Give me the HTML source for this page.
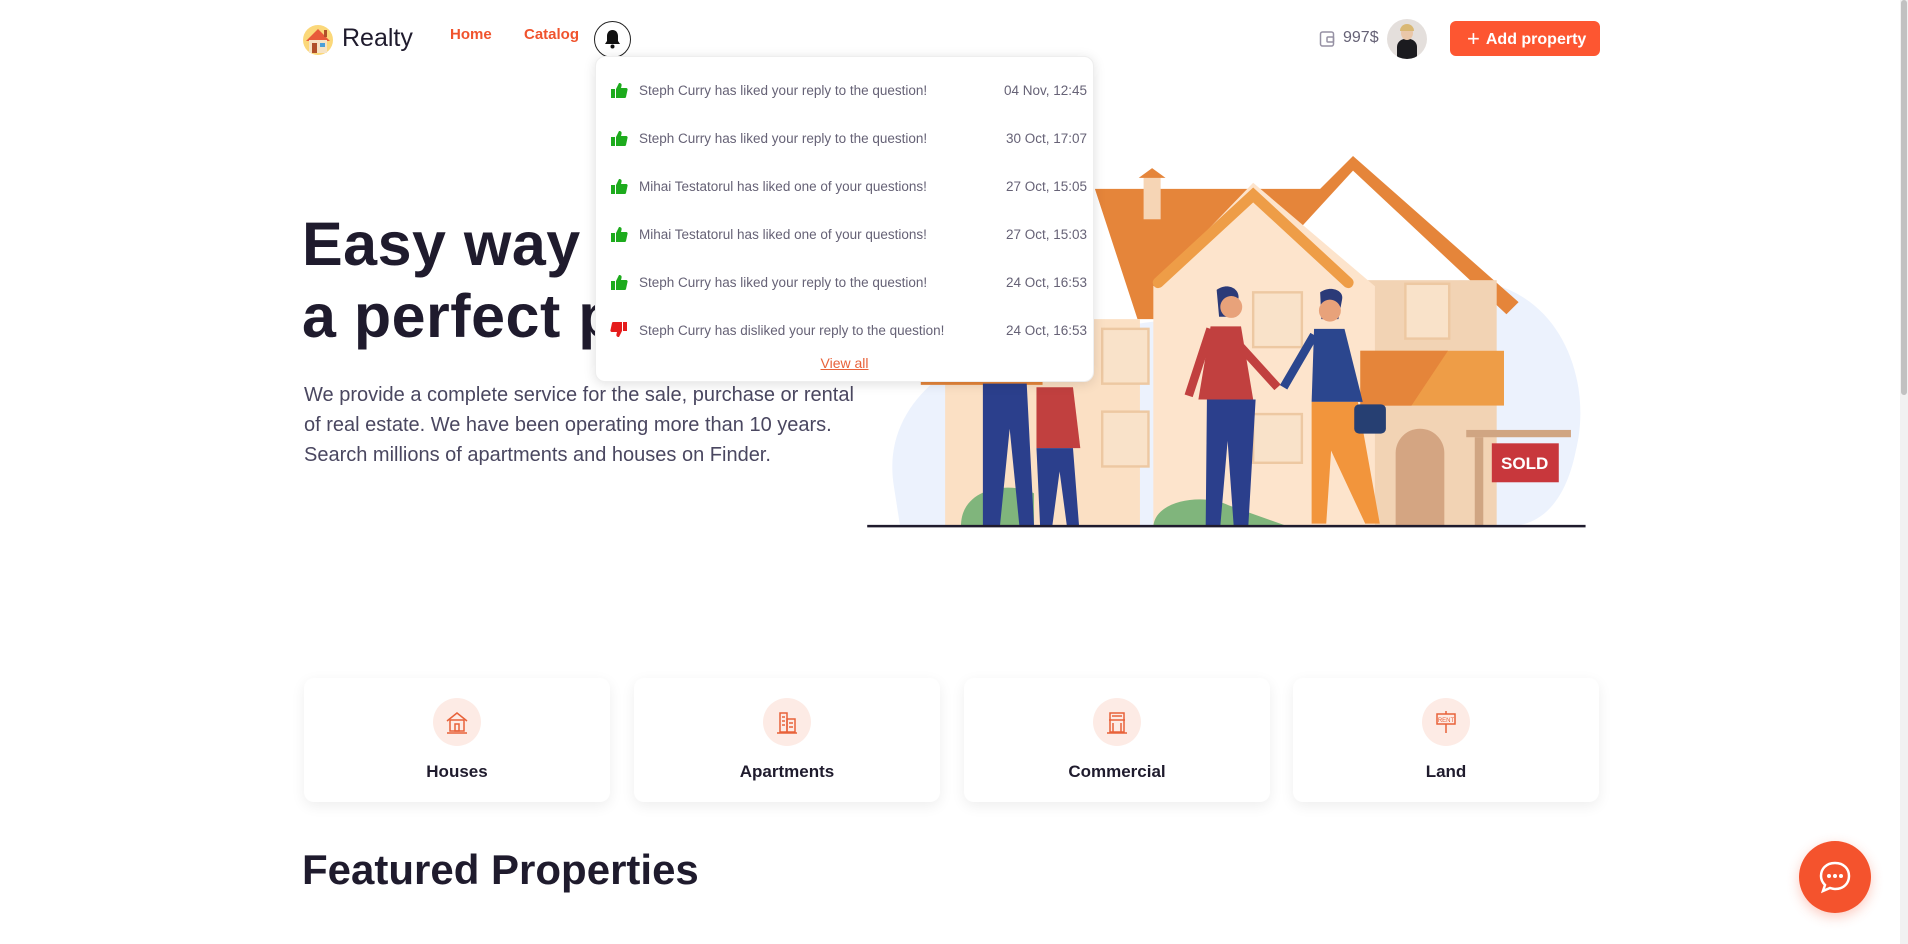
<!DOCTYPE html>
<html><head><meta charset="utf-8"><style>
*{margin:0;padding:0;box-sizing:border-box}
body{width:1908px;height:944px;overflow:hidden;background:#fff;font-family:"Liberation Sans",sans-serif;position:relative;color:#1f1b2d}
.abs{position:absolute}
.nav{font-size:15px;font-weight:bold;color:#f0532d;top:26px}
.dd{left:595px;top:56px;width:499px;height:326px;background:#fff;border-radius:10px;box-shadow:0 2px 12px rgba(0,0,0,.12);border:1px solid #eee}
.row{position:absolute;left:0;width:499px;height:20px;font-size:13.5px;color:#666276}
.row .ic{position:absolute;left:14px;top:0}
.row .t{position:absolute;left:43px;top:2px}
.row .d{position:absolute;right:8px;top:2px}
.card{top:678px;width:306px;height:124px;background:#fff;border-radius:10px;box-shadow:0 4px 14px rgba(0,0,0,.07)}
.card .c{position:absolute;left:129px;top:20px;width:48px;height:48px;border-radius:50%;background:#fdebe5}
.card .l{position:absolute;left:0;right:0;top:84px;text-align:center;font-size:17px;font-weight:bold;color:#1f1b2d}
</style></head><body>
<svg class="abs" style="left:302px;top:24px" width="32" height="32" viewBox="0 0 32 32"><circle cx="16" cy="16" r="15" fill="#fbd87a"/><polygon points="4,17 16,5 28,17" fill="#e85a3a"/><rect x="7" y="16" width="18" height="13" fill="#f6e3c4"/><rect x="10" y="19" width="5" height="10" fill="#b0502a"/><rect x="18" y="19" width="5" height="4" fill="#4a9fd8"/><rect x="22" y="6" width="3" height="7" fill="#b0502a"/></svg>
<div class="abs" style="left:342px;top:24px;font-size:25px;color:#1f1b2d">Realty</div>
<div class="abs nav" style="left:450px">Home</div>
<div class="abs nav" style="left:524px">Catalog</div>
<div class="abs" style="left:594px;top:21px;width:37px;height:37px;border-radius:50%;border:1.5px solid #222"></div>
<svg class="abs" style="left:603px;top:29px" width="19" height="21" viewBox="0 0 19 21"><path d="M9.5 1c-3.5 0-5.5 2.8-5.5 6v5l-2 3h15l-2-3V7c0-3.2-2-6-5.5-6z" fill="#111"/><circle cx="9.5" cy="17.5" r="2" fill="#111"/></svg>

<svg class="abs" style="left:1319px;top:30px" width="16" height="18" viewBox="0 0 16 18"><rect x="1.5" y="2" width="13" height="14" rx="2" fill="none" stroke="#9691a4" stroke-width="1.5"/><rect x="8" y="7" width="6.5" height="5" rx="1" fill="none" stroke="#9691a4" stroke-width="1.5"/></svg>
<div class="abs" style="left:1343px;top:29px;font-size:16px;color:#666276">997$</div>
<div class="abs" style="left:1387px;top:19px;width:40px;height:40px;border-radius:50%;background:#e4dfdc;overflow:hidden"><div style="position:absolute;left:10px;top:20px;width:20px;height:22px;border-radius:8px 8px 0 0;background:#1b1b1f"></div><div style="position:absolute;left:14px;top:7px;width:12px;height:14px;border-radius:50%;background:#e9c7a9"></div><div style="position:absolute;left:13px;top:5px;width:14px;height:7px;border-radius:7px 7px 0 0;background:#d9b874"></div></div>
<div class="abs" style="left:1450px;top:21px;width:150px;height:35px;border-radius:6px;background:#fd5631;color:#fff;font-weight:bold;font-size:16px;line-height:35px;padding-left:17px"><span style="font-size:22px;font-weight:normal;vertical-align:-2px;margin-right:6px">+</span>Add property</div>

<div class="abs" style="left:302px;top:208px;font-size:61px;font-weight:bold;line-height:72px;color:#1f1b2d;letter-spacing:.5px">Easy way to find<br>a perfect property</div>
<div class="abs" style="left:304px;top:380px;font-size:20px;line-height:30px;color:#4a4760;width:600px">We provide a complete service for the sale, purchase or rental<br>of real estate. We have been operating more than 10 years.<br>Search millions of apartments and houses on Finder.</div>

<svg class="abs" style="left:866px;top:146px" width="722" height="384" viewBox="712 120 593 315">
<path d="M735 400 C725 340 770 300 830 280 L1200 230 C1280 230 1310 310 1295 370 C1285 420 1260 432 1240 432 L740 432 Z" fill="#ecf2fd"/>
<polygon points="900,155 1085,155 1112,128 1248,248 1238,258 1112,140 1000,262 935,262" fill="#e5853a"/>
<rect x="940" y="145" width="14" height="35" fill="#f6d5b5"/><polygon points="936,146 947,138 958,146" fill="#e5853a"/>
<rect x="777" y="262" width="160" height="170" fill="#fbe0c4"/>
<rect x="757" y="308" width="100" height="8" fill="#e5853a"/>
<rect x="1110" y="230" width="120" height="202" fill="#f2d3b4"/>
<polygon points="1030,150 1130,235 1130,432 948,432 948,235" fill="#fde4cc"/>
<polyline points="952,232 1030,160 1108,232" fill="none" stroke="#ee9d47" stroke-width="9" stroke-linecap="round"/>
<rect x="1118" y="288" width="118" height="45" fill="#ee9d47"/><polygon points="1118,288 1190,288 1160,333 1118,333" fill="#e5853a"/>
<g fill="#f9e2c9" stroke="#edc8a2" stroke-width="2">
<rect x="906" y="270" width="38" height="45"/><rect x="906" y="338" width="38" height="45"/>
<rect x="1155" y="233" width="36" height="45"/><rect x="1030" y="240" width="40" height="45"/><rect x="1030" y="340" width="40" height="40"/></g>
<path d="M1147 432 V372 a20 20 0 0 1 40 0 V432 Z" fill="#d4a582"/>
<rect x="1205" y="353" width="86" height="6" fill="#d0a582"/><rect x="1212" y="359" width="7" height="73" fill="#d0a582"/>
<rect x="1226" y="364" width="55" height="32" fill="#c8373c"/>
<text x="1253" y="385" font-family="Liberation Sans,sans-serif" font-weight="bold" font-size="14" fill="#fff" text-anchor="middle">SOLD</text>
<path d="M790 432 C790 400 830 395 850 405 L850 432Z" fill="#80b57c"/>
<path d="M948 432 C950 410 990 405 1010 415 L1058 432Z" fill="#80b57c"/>
<path d="M1000 238 c8-6 18-2 18 6 l-2 16 -14 0z" fill="#2b3a78"/><circle cx="1012" cy="252" r="9" fill="#e8a27a"/>
<path d="M995 268 l25 0 10 60 -45 0 z" fill="#c1403f"/><path d="M995 270 l-18 55" stroke="#c1403f" stroke-width="7"/><path d="M1020 285 l30 33" stroke="#c1403f" stroke-width="7"/>
<path d="M992 328 l40 0 -6 104 -12 0 -5-70 -6 70 -12 0z" fill="#2b3f8c"/>
<path d="M1085 240 c8-6 20-2 18 6 l-3 16 -14 0z" fill="#2b3a78"/><circle cx="1093" cy="255" r="9" fill="#e8a27a"/>
<path d="M1080 270 l25 0 15 60 -42 0 z" fill="#2b468e"/><path d="M1080 275 l-25 43" stroke="#2b468e" stroke-width="7"/>
<path d="M1078 330 l38 0 18 100 -12 0 -28 -60 -4 60 -12 0z" fill="#f2953c"/>
<rect x="1113" y="332" width="26" height="24" rx="4" fill="#263f72"/>
<path d="M808 315 l36 0 6 117 -12 0 -8 -80 -8 80 -14 0z" fill="#2b3f8c"/>
<path d="M852 318 l30 0 6 50 -36 0z" fill="#c1403f"/><path d="M852 368 l30 0 5 64 -10 0 -6 -45 -6 45 -10 0z" fill="#2b3f8c"/>
<line x1="713" y1="432" x2="1303" y2="432" stroke="#1f1b2d" stroke-width="2"/>
</svg>

<div class="abs dd">
<div class="row" style="top:24px"><svg class="ic" width="18" height="18" viewBox="0 0 18 18"><rect x="1" y="8" width="4" height="9" fill="#1dab1d"/><path d="M6 8 L9 2 c2 0 3 1 2.5 3 L11 7 h5 c1 0 2 1 1.5 2 l-1.5 7 c-.3 1-1 1-2 1 H6z" fill="#1dab1d"/></svg><span class="t">Steph Curry has liked your reply to the question!</span><span class="d">04 Nov, 12:45</span></div>
<div class="row" style="top:72px"><svg class="ic" width="18" height="18" viewBox="0 0 18 18"><rect x="1" y="8" width="4" height="9" fill="#1dab1d"/><path d="M6 8 L9 2 c2 0 3 1 2.5 3 L11 7 h5 c1 0 2 1 1.5 2 l-1.5 7 c-.3 1-1 1-2 1 H6z" fill="#1dab1d"/></svg><span class="t">Steph Curry has liked your reply to the question!</span><span class="d">30 Oct, 17:07</span></div>
<div class="row" style="top:120px"><svg class="ic" width="18" height="18" viewBox="0 0 18 18"><rect x="1" y="8" width="4" height="9" fill="#1dab1d"/><path d="M6 8 L9 2 c2 0 3 1 2.5 3 L11 7 h5 c1 0 2 1 1.5 2 l-1.5 7 c-.3 1-1 1-2 1 H6z" fill="#1dab1d"/></svg><span class="t">Mihai Testatorul has liked one of your questions!</span><span class="d">27 Oct, 15:05</span></div>
<div class="row" style="top:168px"><svg class="ic" width="18" height="18" viewBox="0 0 18 18"><rect x="1" y="8" width="4" height="9" fill="#1dab1d"/><path d="M6 8 L9 2 c2 0 3 1 2.5 3 L11 7 h5 c1 0 2 1 1.5 2 l-1.5 7 c-.3 1-1 1-2 1 H6z" fill="#1dab1d"/></svg><span class="t">Mihai Testatorul has liked one of your questions!</span><span class="d">27 Oct, 15:03</span></div>
<div class="row" style="top:216px"><svg class="ic" width="18" height="18" viewBox="0 0 18 18"><rect x="1" y="8" width="4" height="9" fill="#1dab1d"/><path d="M6 8 L9 2 c2 0 3 1 2.5 3 L11 7 h5 c1 0 2 1 1.5 2 l-1.5 7 c-.3 1-1 1-2 1 H6z" fill="#1dab1d"/></svg><span class="t">Steph Curry has liked your reply to the question!</span><span class="d">24 Oct, 16:53</span></div>
<div class="row" style="top:264px"><svg class="ic" width="18" height="18" viewBox="0 0 18 18"><g transform="rotate(180 9 9)"><rect x="1" y="8" width="4" height="9" fill="#e51c1c"/><path d="M6 8 L9 2 c2 0 3 1 2.5 3 L11 7 h5 c1 0 2 1 1.5 2 l-1.5 7 c-.3 1-1 1-2 1 H6z" fill="#e51c1c"/></g></svg><span class="t">Steph Curry has disliked your reply to the question!</span><span class="d">24 Oct, 16:53</span></div>
<div class="abs" style="left:0;right:0;top:298px;text-align:center;font-size:14px;color:#e8623a;text-decoration:underline">View all</div>
</div>

<div class="abs card" style="left:304px"><div class="c"></div><svg class="abs" style="left:140px;top:31px" width="26" height="26" viewBox="0 0 26 26" fill="none" stroke="#e8623a" stroke-width="1.5"><path d="M3 12 L13 4 L23 12"/><rect x="6" y="11" width="14" height="11"/><rect x="11" y="15" width="4" height="7"/><line x1="3" y1="24" x2="23" y2="24"/></svg><div class="l">Houses</div></div>
<div class="abs card" style="left:634px"><div class="c"></div><svg class="abs" style="left:140px;top:31px" width="26" height="26" viewBox="0 0 26 26" fill="none" stroke="#e8623a" stroke-width="1.5"><rect x="6" y="4" width="7" height="19"/><rect x="13" y="10" width="8" height="13"/><line x1="3" y1="24" x2="23" y2="24"/><path d="M8 8h3M8 12h3M8 16h3M15 14h4M15 18h4"/></svg><div class="l">Apartments</div></div>
<div class="abs card" style="left:964px"><div class="c"></div><svg class="abs" style="left:140px;top:31px" width="26" height="26" viewBox="0 0 26 26" fill="none" stroke="#e8623a" stroke-width="1.5"><rect x="6" y="4" width="14" height="19"/><path d="M5 11h16M9 14v9M17 14v9M8 7h10"/><line x1="3" y1="24" x2="23" y2="24"/></svg><div class="l">Commercial</div></div>
<div class="abs card" style="left:1293px"><div class="c"></div><svg class="abs" style="left:140px;top:31px" width="26" height="26" viewBox="0 0 26 26" fill="none" stroke="#e8623a" stroke-width="1.5"><rect x="4" y="5" width="18" height="10"/><path d="M13 2v3M13 15v9"/><text x="13" y="13" font-size="6" fill="#e8623a" stroke="none" text-anchor="middle" font-family="Liberation Sans">RENT</text></svg><div class="l">Land</div></div>

<div class="abs" style="left:302px;top:846px;font-size:42px;font-weight:bold;color:#1f1b2d">Featured Properties</div>

<div class="abs" style="left:1799px;top:841px;width:72px;height:72px;border-radius:50%;background:#f4532d;box-shadow:0 4px 12px rgba(244,83,45,.3)"></div>
<svg class="abs" style="left:1817px;top:859px" width="36" height="36" viewBox="0 0 36 36"><path d="M18 4 C9 4 4 10 4 17 c0 4 2 7 4 9 l-2 6 7-3 c2 .6 3 1 5 1 c9 0 14-6 14-13 S27 4 18 4z" fill="none" stroke="#fff" stroke-width="2.5"/><circle cx="12" cy="17" r="2" fill="#fff"/><circle cx="18" cy="17" r="2" fill="#fff"/><circle cx="24" cy="17" r="2" fill="#fff"/></svg>

<div class="abs" style="left:1900px;top:0;width:8px;height:944px;background:#f1f1f1"></div>
<div class="abs" style="left:1901px;top:0;width:6px;height:395px;background:#c1c1c1;border-radius:3px"></div>
</body></html>
